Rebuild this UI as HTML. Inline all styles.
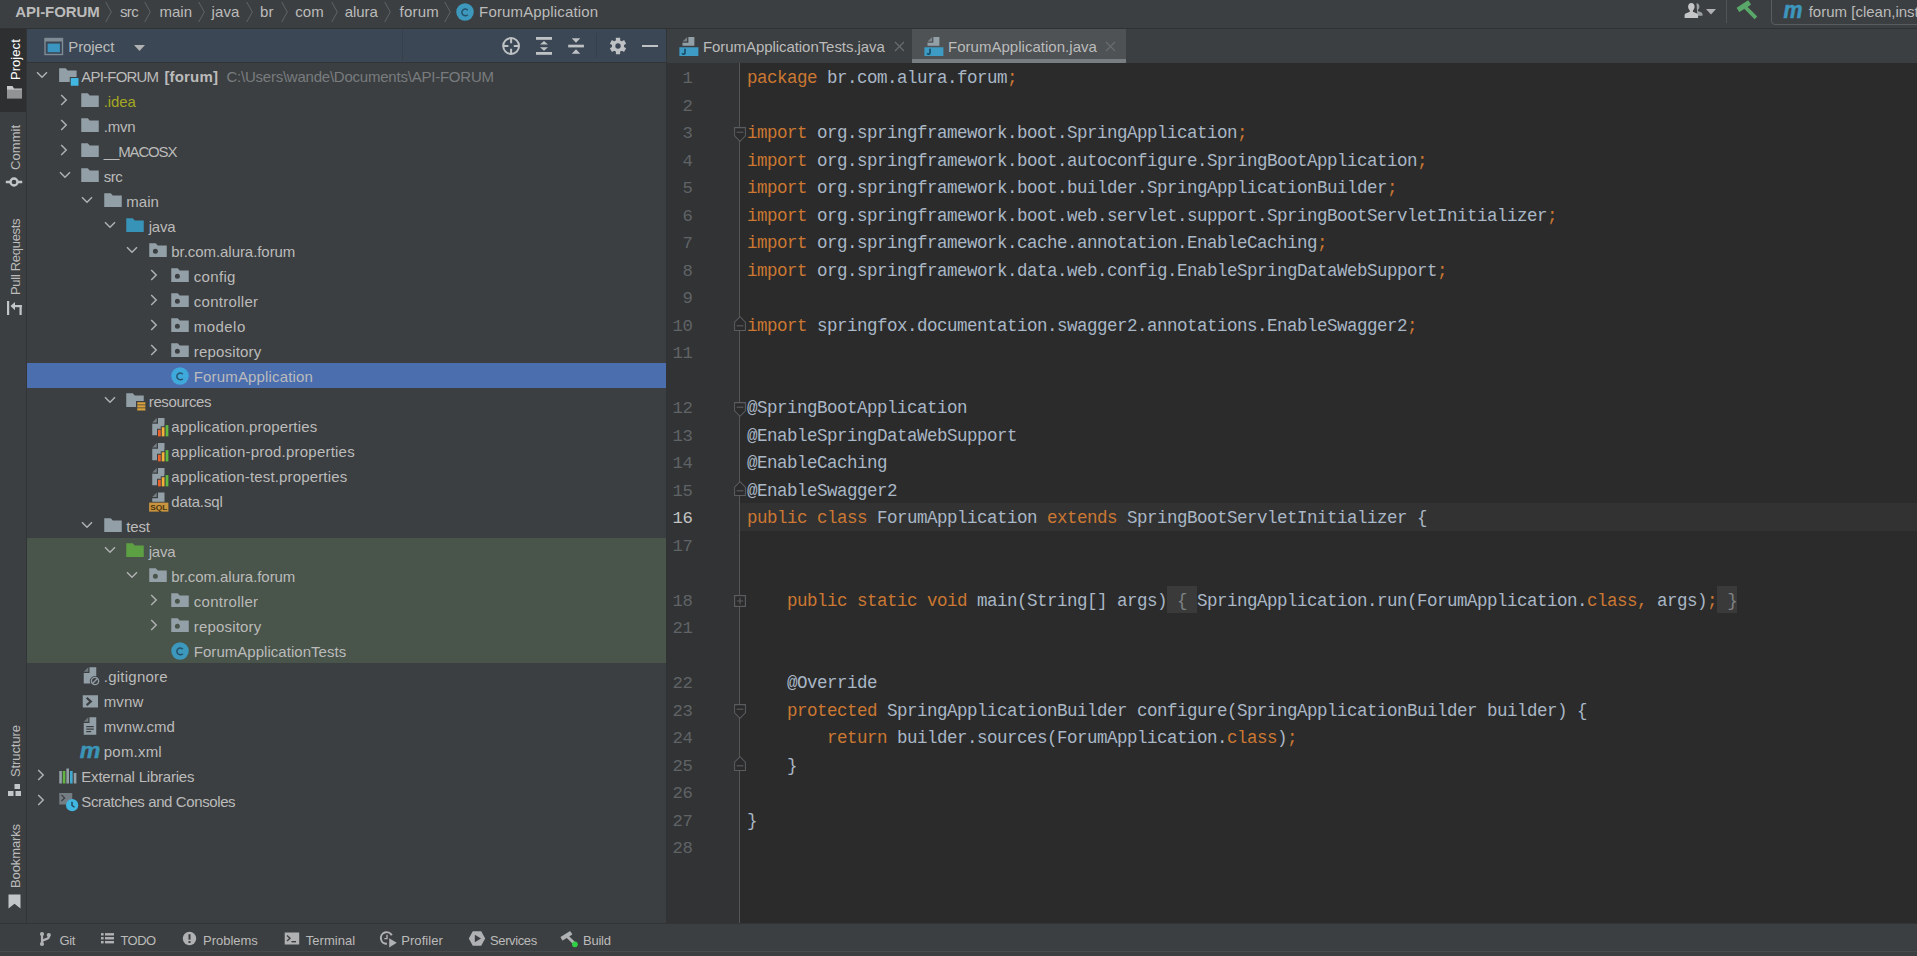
<!DOCTYPE html><html><head><meta charset="utf-8"><title>API-FORUM</title><style>
html,body{margin:0;padding:0;background:#3c3f41;overflow:hidden;}
body{width:1917px;height:956px;overflow:hidden;position:relative;font-family:"Liberation Sans",sans-serif;}
#app{position:absolute;left:0;top:0;width:1917px;height:956px;overflow:hidden;background:#3c3f41;}
.r{position:absolute;}
.ic{position:absolute;overflow:visible;}
.t{position:absolute;white-space:pre;line-height:1;}
.v{position:absolute;white-space:pre;line-height:1;transform-origin:0 0;transform:rotate(-90deg);font-size:13px;}
.ln{position:absolute;left:666px;width:26.400px;text-align:right;font-family:"Liberation Mono",monospace;font-size:17.300px;letter-spacing:-0.380px;line-height:27.5px;height:27.5px;color:#606366;white-space:pre;padding-top:2px;box-sizing:border-box;}
.ln.cur{color:#c4c4c4;}
.code{position:absolute;left:747px;font-family:"Liberation Mono",monospace;font-size:17.5px;letter-spacing:-0.5017px;line-height:27.5px;height:27.5px;color:#a9b7c6;white-space:pre;padding-top:2px;box-sizing:border-box;}
.k{color:#cc7832;}
.f{color:#7e8284;background:#3a3a3a;padding:5px 0 2.5px;}
</style></head><body><div id="app">
<div class="r" style="left:0px;top:0px;width:1917px;height:956px;background:#3c3f41;"></div>
<div class="r" style="left:0px;top:28px;width:1917px;height:1px;background:#2f3133;"></div>
<div class="r" style="left:0px;top:29px;width:26px;height:83px;background:#2d2f30;"></div>
<div class="r" style="left:26px;top:29px;width:1px;height:894px;background:#323537;"></div>
<div class="r" style="left:27px;top:29px;width:639px;height:33px;background:#3b4754;"></div>
<div class="r" style="left:27px;top:62px;width:639px;height:1px;background:#323537;"></div>
<div class="r" style="left:402px;top:30px;width:1px;height:31px;background:#35404b;"></div>
<div class="r" style="left:596px;top:33px;width:1px;height:25px;background:#33404d;"></div>
<div class="r" style="left:27px;top:363px;width:639px;height:25px;background:#4b6eaf;"></div>
<div class="r" style="left:27px;top:538px;width:639px;height:125px;background:#49544a;"></div>
<div class="r" style="left:666px;top:63px;width:73px;height:860px;background:#313335;"></div>
<div class="r" style="left:739px;top:63px;width:1px;height:860px;background:#555555;"></div>
<div class="r" style="left:740px;top:63px;width:1177px;height:860px;background:#2b2b2b;"></div>
<div class="r" style="left:666px;top:29px;width:1px;height:34px;background:#323537;"></div>
<div class="r" style="left:740px;top:503px;width:1177px;height:28px;background:#323232;"></div>
<div class="r" style="left:912px;top:29px;width:214px;height:30px;background:#4e5254;"></div>
<div class="r" style="left:912px;top:59px;width:214px;height:4px;background:#787d82;"></div>
<div class="r" style="left:0px;top:923px;width:1917px;height:1px;background:#323537;"></div>
<div class="r" style="left:0px;top:951px;width:1917px;height:1px;background:#484b4d;"></div>
<svg class="ic" style="left:105px;top:1px" width="8" height="22" viewBox="0 0 8 22"><path d="M0.7 1L6.3 11L0.7 21" fill="none" stroke="#606467" stroke-width="1"/></svg>
<svg class="ic" style="left:144.2px;top:1px" width="8" height="22" viewBox="0 0 8 22"><path d="M0.7 1L6.3 11L0.7 21" fill="none" stroke="#606467" stroke-width="1"/></svg>
<svg class="ic" style="left:198px;top:1px" width="8" height="22" viewBox="0 0 8 22"><path d="M0.7 1L6.3 11L0.7 21" fill="none" stroke="#606467" stroke-width="1"/></svg>
<svg class="ic" style="left:245.6px;top:1px" width="8" height="22" viewBox="0 0 8 22"><path d="M0.7 1L6.3 11L0.7 21" fill="none" stroke="#606467" stroke-width="1"/></svg>
<svg class="ic" style="left:281.2px;top:1px" width="8" height="22" viewBox="0 0 8 22"><path d="M0.7 1L6.3 11L0.7 21" fill="none" stroke="#606467" stroke-width="1"/></svg>
<svg class="ic" style="left:330.8px;top:1px" width="8" height="22" viewBox="0 0 8 22"><path d="M0.7 1L6.3 11L0.7 21" fill="none" stroke="#606467" stroke-width="1"/></svg>
<svg class="ic" style="left:383.8px;top:1px" width="8" height="22" viewBox="0 0 8 22"><path d="M0.7 1L6.3 11L0.7 21" fill="none" stroke="#606467" stroke-width="1"/></svg>
<svg class="ic" style="left:444px;top:1px" width="8" height="22" viewBox="0 0 8 22"><path d="M0.7 1L6.3 11L0.7 21" fill="none" stroke="#606467" stroke-width="1"/></svg>
<svg class="ic" style="left:455px;top:1.5px" width="20" height="20" viewBox="0 0 16 16" ><circle cx="8" cy="8" r="7" fill="#3c98bd"/><path fill="none" stroke="#1f3f52" stroke-opacity="0.8" stroke-width="1.2" d="M10.200 6.500a2.700 2.700 0 1 0 0 3.600"/></svg>
<svg class="ic" style="left:1684px;top:2px" width="20" height="18" viewBox="0 0 20 18">
<path fill="#9da0a2" d="M12.5 1.2c1.8 0 2.9 1.4 2.9 3.2c0 1.5-.6 2.8-1.5 3.5v1l3.6 1.6c.6.3 1 .9 1 1.6v1.6h-5.2z"/>
<path fill="#c4c6c7" d="M7.3 1c2 0 3.3 1.5 3.3 3.6c0 1.7-.7 3.1-1.7 3.9v1.2l4.1 1.9c.7.3 1.1 1 1.1 1.8V16H.6v-2.6c0-.8.4-1.5 1.1-1.8l4.1-1.9V8.500c-1-.8-1.700-2.200-1.700-3.900c0-2.100 1.300-3.600 3.200-3.600z"/></svg>
<svg class="ic" style="left:1706px;top:9px" width="10" height="6" viewBox="0 0 10 6"><path d="M0 0h10L5 5.600z" fill="#afb1b3"/></svg>
<div class="r" style="left:1726px;top:0px;width:1px;height:23px;background:#515456;"></div>
<svg class="ic" style="left:1736px;top:0px" width="24" height="22" viewBox="0 0 24 22"><g fill="#59a869"><rect x="-7" y="-2.600" width="14" height="5.200" rx="0.600" transform="translate(7.800 6.200) rotate(-33)"/><rect x="-1.900" y="0" width="3.800" height="16" transform="translate(8.600 6.500) rotate(-45)"/></g></svg>
<div class="r" style="left:1771px;top:-6px;width:160px;height:31px;border:1.500px solid #5a5d5f;border-radius:4px;box-sizing:border-box"></div>
<svg class="ic" style="left:1782px;top:1px" width="22" height="20" viewBox="0 0 22 20"><text x="11" y="17" font-family='"Liberation Sans", sans-serif' font-style="italic" font-weight="bold" font-size="23" text-anchor="middle" fill="#3d96bd" stroke="#3d96bd" stroke-width="0.600" textLength="19" lengthAdjust="spacingAndGlyphs">m</text></svg>
<svg class="ic" style="left:43.700px;top:37.200px" width="20" height="19" viewBox="0 0 20 19">
<rect x="1" y="1.500" width="17.500" height="16" fill="none" stroke="#7f8b95" stroke-width="1.400"/><rect x="1" y="1.500" width="17.500" height="3" fill="#7f8b95"/>
<rect x="3.600" y="6.600" width="12.300" height="8.600" fill="#3a95c0"/></svg>
<svg class="ic" style="left:133.500px;top:44.500px" width="11" height="7" viewBox="0 0 11 7"><path d="M0 0h11L5.500 6z" fill="#afb1b3"/></svg>
<svg class="ic" style="left:501px;top:36px" width="20" height="20" viewBox="0 0 20 20"><g fill="none" stroke="#bfc2c4" stroke-width="2">
<circle cx="10.1" cy="10" r="7.9"/><path d="M10.1 2.5v4.8M10.1 12.700V17.500M2.600 10h4.800M12.800 10H17.600"/></g></svg>
<svg class="ic" style="left:534px;top:36px" width="20" height="20" viewBox="0 0 20 20"><g fill="#bfc2c4">
<rect x="2" y="1" width="16" height="2.800"/><rect x="2" y="16" width="16" height="2.800"/>
<path d="M10 5.100l4 3.500H6zM10 14.700l4-3.500H6z"/></g></svg>
<svg class="ic" style="left:566px;top:36px" width="20" height="20" viewBox="0 0 20 20"><g fill="#bfc2c4">
<rect x="2.200" y="8.700" width="15.700" height="2.700"/>
<path d="M10 6.800l4.300-4.500H5.700zM10 13.200l4.300 4.500H5.700z"/></g></svg>
<svg class="ic" style="left:608px;top:36px" width="20" height="20" viewBox="0 0 20 20"><g transform="translate(10 10)">
<g fill="#bfc2c4"><rect x="-2.100" y="-8.200" width="4.200" height="16.400" rx="0.500"/><rect x="-2.100" y="-8.200" width="4.200" height="16.400" rx="0.500" transform="rotate(60)"/><rect x="-2.100" y="-8.200" width="4.200" height="16.400" rx="0.500" transform="rotate(120)"/>
<circle r="6.100"/></g><circle r="2.700" fill="#3b4754"/></g></svg>
<div class="r" style="left:642px;top:44.5px;width:16px;height:2.8px;background:#bfc2c4;"></div>
<svg class="ic" style="left:36.0px;top:71.0px" width="12" height="8" viewBox="0 0 12 8"><path d="M1 1.200L6 6.200L11 1.200" fill="none" stroke="#afb1b3" stroke-width="1.500"/></svg>
<svg class="ic" style="left:56.9px;top:64.8px" width="20" height="20" viewBox="0 0 16 16" ><path fill="#9aa7b0" fill-opacity="0.92" d="M1.7 2.5h5.2l1.6 1.9H15.700v5.100H10.200v4H1.700z"/><rect x="11" y="10.400" width="6.200" height="6.200" fill="#40b6e0"/></svg>
<svg class="ic" style="left:59.5px;top:94.0px" width="8" height="12" viewBox="0 0 8 12"><path d="M1.200 1L6.200 6L1.200 11" fill="none" stroke="#afb1b3" stroke-width="1.500"/></svg>
<svg class="ic" style="left:79.75px;top:89.8px" width="20" height="20" viewBox="0 0 16 16" ><path fill="#9aa7b0" fill-opacity="0.92" d="M1 2.5h5.2l1.6 1.9H15v9.1H1z"/></svg>
<svg class="ic" style="left:59.5px;top:119.0px" width="8" height="12" viewBox="0 0 8 12"><path d="M1.200 1L6.200 6L1.200 11" fill="none" stroke="#afb1b3" stroke-width="1.500"/></svg>
<svg class="ic" style="left:79.75px;top:114.8px" width="20" height="20" viewBox="0 0 16 16" ><path fill="#9aa7b0" fill-opacity="0.92" d="M1 2.5h5.2l1.6 1.9H15v9.1H1z"/></svg>
<svg class="ic" style="left:59.5px;top:144.0px" width="8" height="12" viewBox="0 0 8 12"><path d="M1.200 1L6.200 6L1.200 11" fill="none" stroke="#afb1b3" stroke-width="1.500"/></svg>
<svg class="ic" style="left:79.75px;top:139.8px" width="20" height="20" viewBox="0 0 16 16" ><path fill="#9aa7b0" fill-opacity="0.92" d="M1 2.5h5.2l1.6 1.9H15v9.1H1z"/></svg>
<svg class="ic" style="left:58.5px;top:171.0px" width="12" height="8" viewBox="0 0 12 8"><path d="M1 1.200L6 6.200L11 1.200" fill="none" stroke="#afb1b3" stroke-width="1.500"/></svg>
<svg class="ic" style="left:79.75px;top:164.8px" width="20" height="20" viewBox="0 0 16 16" ><path fill="#9aa7b0" fill-opacity="0.92" d="M1 2.5h5.2l1.6 1.9H15v9.1H1z"/></svg>
<svg class="ic" style="left:81.0px;top:196.0px" width="12" height="8" viewBox="0 0 12 8"><path d="M1 1.200L6 6.200L11 1.200" fill="none" stroke="#afb1b3" stroke-width="1.500"/></svg>
<svg class="ic" style="left:102.75px;top:189.8px" width="20" height="20" viewBox="0 0 16 16" ><path fill="#9aa7b0" fill-opacity="0.92" d="M1 2.5h5.2l1.6 1.9H15v9.1H1z"/></svg>
<svg class="ic" style="left:103.5px;top:221.0px" width="12" height="8" viewBox="0 0 12 8"><path d="M1 1.200L6 6.200L11 1.200" fill="none" stroke="#afb1b3" stroke-width="1.500"/></svg>
<svg class="ic" style="left:124.75px;top:214.8px" width="20" height="20" viewBox="0 0 16 16" ><path fill="#3893b9" fill-opacity="1" d="M1 2.5h5.2l1.6 1.9H15v9.1H1z"/></svg>
<svg class="ic" style="left:126.0px;top:246.0px" width="12" height="8" viewBox="0 0 12 8"><path d="M1 1.200L6 6.200L11 1.200" fill="none" stroke="#afb1b3" stroke-width="1.500"/></svg>
<svg class="ic" style="left:147.85px;top:239.8px" width="20" height="20" viewBox="0 0 16 16" ><path fill="#9aa7b0" fill-opacity="0.92" fill-rule="evenodd" d="M1 2.5h5.2l1.6 1.9H15v9.1H1z M3.9 9a2 2 0 1 0 4 0a2 2 0 1 0 -4 0z"/></svg>
<svg class="ic" style="left:149.5px;top:269.0px" width="8" height="12" viewBox="0 0 8 12"><path d="M1.200 1L6.200 6L1.200 11" fill="none" stroke="#afb1b3" stroke-width="1.500"/></svg>
<svg class="ic" style="left:169.75px;top:264.8px" width="20" height="20" viewBox="0 0 16 16" ><path fill="#9aa7b0" fill-opacity="0.92" fill-rule="evenodd" d="M1 2.5h5.2l1.6 1.9H15v9.1H1z M3.9 9a2 2 0 1 0 4 0a2 2 0 1 0 -4 0z"/></svg>
<svg class="ic" style="left:149.5px;top:294.0px" width="8" height="12" viewBox="0 0 8 12"><path d="M1.200 1L6.200 6L1.200 11" fill="none" stroke="#afb1b3" stroke-width="1.500"/></svg>
<svg class="ic" style="left:169.75px;top:289.8px" width="20" height="20" viewBox="0 0 16 16" ><path fill="#9aa7b0" fill-opacity="0.92" fill-rule="evenodd" d="M1 2.5h5.2l1.6 1.9H15v9.1H1z M3.9 9a2 2 0 1 0 4 0a2 2 0 1 0 -4 0z"/></svg>
<svg class="ic" style="left:149.5px;top:319.0px" width="8" height="12" viewBox="0 0 8 12"><path d="M1.200 1L6.200 6L1.200 11" fill="none" stroke="#afb1b3" stroke-width="1.500"/></svg>
<svg class="ic" style="left:169.75px;top:314.8px" width="20" height="20" viewBox="0 0 16 16" ><path fill="#9aa7b0" fill-opacity="0.92" fill-rule="evenodd" d="M1 2.5h5.2l1.6 1.9H15v9.1H1z M3.9 9a2 2 0 1 0 4 0a2 2 0 1 0 -4 0z"/></svg>
<svg class="ic" style="left:149.5px;top:344.0px" width="8" height="12" viewBox="0 0 8 12"><path d="M1.200 1L6.200 6L1.200 11" fill="none" stroke="#afb1b3" stroke-width="1.500"/></svg>
<svg class="ic" style="left:169.75px;top:339.8px" width="20" height="20" viewBox="0 0 16 16" ><path fill="#9aa7b0" fill-opacity="0.92" fill-rule="evenodd" d="M1 2.5h5.2l1.6 1.9H15v9.1H1z M3.9 9a2 2 0 1 0 4 0a2 2 0 1 0 -4 0z"/></svg>
<svg class="ic" style="left:169.75px;top:366.1px" width="20" height="20" viewBox="0 0 16 16" ><circle cx="8" cy="8" r="7" fill="#3fa9dc"/><path fill="none" stroke="#1f3f52" stroke-opacity="0.8" stroke-width="1.2" d="M10.200 6.500a2.700 2.700 0 1 0 0 3.600"/></svg>
<svg class="ic" style="left:103.5px;top:396.0px" width="12" height="8" viewBox="0 0 12 8"><path d="M1 1.200L6 6.200L11 1.200" fill="none" stroke="#afb1b3" stroke-width="1.500"/></svg>
<svg class="ic" style="left:124.75px;top:389.8px" width="20" height="20" viewBox="0 0 16 16" ><path fill="#9aa7b0" fill-opacity="0.92" d="M1 2.5h5.2l1.6 1.9H15v4.400H8.800v4.700H1z"/><path fill="#d9a13a" d="M9.800 9.800h6.500v1.700h-6.500zM9.800 12.200h6.500v1.700h-6.500zM9.800 14.600h6.500v1.700h-6.500z"/></svg>
<svg class="ic" style="left:147.85px;top:415.7px" width="20" height="20" viewBox="0 0 16 16" ><path fill="#9aa7b0" fill-opacity="0.92" d="M8 1.600H13.200V15.400H3.400V6.200H8z"/><path fill="#9aa7b0" fill-opacity="0.6" d="M7 1.600L3.400 5.200H7z"/><path fill="#3c3f41" d="M7.200 10.200H10.200V8.200H13.300V6.500H17V17H7.200z"/><rect x="8" y="11" width="2.200" height="5.300" fill="#e8642c"/><rect x="11" y="9" width="2.200" height="7.300" fill="#f1b03a"/><rect x="14.100" y="7.300" width="2.200" height="9" fill="#5fb83f"/></svg>
<svg class="ic" style="left:147.85px;top:440.7px" width="20" height="20" viewBox="0 0 16 16" ><path fill="#9aa7b0" fill-opacity="0.92" d="M8 1.600H13.200V15.400H3.400V6.200H8z"/><path fill="#9aa7b0" fill-opacity="0.6" d="M7 1.600L3.400 5.200H7z"/><path fill="#3c3f41" d="M7.200 10.200H10.200V8.200H13.300V6.500H17V17H7.200z"/><rect x="8" y="11" width="2.200" height="5.300" fill="#e8642c"/><rect x="11" y="9" width="2.200" height="7.300" fill="#f1b03a"/><rect x="14.100" y="7.300" width="2.200" height="9" fill="#5fb83f"/></svg>
<svg class="ic" style="left:147.85px;top:465.7px" width="20" height="20" viewBox="0 0 16 16" ><path fill="#9aa7b0" fill-opacity="0.92" d="M8 1.600H13.200V15.400H3.400V6.200H8z"/><path fill="#9aa7b0" fill-opacity="0.6" d="M7 1.600L3.400 5.200H7z"/><path fill="#3c3f41" d="M7.200 10.200H10.200V8.200H13.300V6.500H17V17H7.200z"/><rect x="8" y="11" width="2.200" height="5.300" fill="#e8642c"/><rect x="11" y="9" width="2.200" height="7.300" fill="#f1b03a"/><rect x="14.100" y="7.300" width="2.200" height="9" fill="#5fb83f"/></svg>
<svg class="ic" style="left:147.85px;top:490.7px" width="20" height="20" viewBox="0 0 16 16" ><path fill="#9aa7b0" fill-opacity="0.92" d="M8 1.100H13.200V8.600H3.400V5.700H8z"/><path fill="#9aa7b0" fill-opacity="0.6" d="M7 1.100L3.400 4.700H7z"/><rect x="0.900" y="9.300" width="15.400" height="7.200" fill="#c9963f"/><text x="8.600" y="15.400" font-family="Liberation Sans, sans-serif" font-weight="bold" font-size="6.300" text-anchor="middle" fill="#4a3512" textLength="13.800" lengthAdjust="spacingAndGlyphs">SQL</text></svg>
<svg class="ic" style="left:81.0px;top:521.0px" width="12" height="8" viewBox="0 0 12 8"><path d="M1 1.200L6 6.200L11 1.200" fill="none" stroke="#afb1b3" stroke-width="1.500"/></svg>
<svg class="ic" style="left:102.75px;top:514.8px" width="20" height="20" viewBox="0 0 16 16" ><path fill="#9aa7b0" fill-opacity="0.92" d="M1 2.5h5.2l1.6 1.9H15v9.1H1z"/></svg>
<svg class="ic" style="left:103.5px;top:546.0px" width="12" height="8" viewBox="0 0 12 8"><path d="M1 1.200L6 6.200L11 1.200" fill="none" stroke="#afb1b3" stroke-width="1.500"/></svg>
<svg class="ic" style="left:124.75px;top:539.8px" width="20" height="20" viewBox="0 0 16 16" ><path fill="#5fae42" fill-opacity="0.85" d="M1 2.5h5.2l1.6 1.9H15v9.1H1z"/></svg>
<svg class="ic" style="left:126.0px;top:571.0px" width="12" height="8" viewBox="0 0 12 8"><path d="M1 1.200L6 6.200L11 1.200" fill="none" stroke="#afb1b3" stroke-width="1.500"/></svg>
<svg class="ic" style="left:147.85px;top:564.8px" width="20" height="20" viewBox="0 0 16 16" ><path fill="#9aa7b0" fill-opacity="0.92" fill-rule="evenodd" d="M1 2.5h5.2l1.6 1.9H15v9.1H1z M3.9 9a2 2 0 1 0 4 0a2 2 0 1 0 -4 0z"/></svg>
<svg class="ic" style="left:149.5px;top:594.0px" width="8" height="12" viewBox="0 0 8 12"><path d="M1.200 1L6.200 6L1.200 11" fill="none" stroke="#afb1b3" stroke-width="1.500"/></svg>
<svg class="ic" style="left:169.75px;top:589.8px" width="20" height="20" viewBox="0 0 16 16" ><path fill="#9aa7b0" fill-opacity="0.92" fill-rule="evenodd" d="M1 2.5h5.2l1.6 1.9H15v9.1H1z M3.9 9a2 2 0 1 0 4 0a2 2 0 1 0 -4 0z"/></svg>
<svg class="ic" style="left:149.5px;top:619.0px" width="8" height="12" viewBox="0 0 8 12"><path d="M1.200 1L6.200 6L1.200 11" fill="none" stroke="#afb1b3" stroke-width="1.500"/></svg>
<svg class="ic" style="left:169.75px;top:614.8px" width="20" height="20" viewBox="0 0 16 16" ><path fill="#9aa7b0" fill-opacity="0.92" fill-rule="evenodd" d="M1 2.5h5.2l1.6 1.9H15v9.1H1z M3.9 9a2 2 0 1 0 4 0a2 2 0 1 0 -4 0z"/></svg>
<svg class="ic" style="left:169.75px;top:641.1px" width="20" height="20" viewBox="0 0 16 16" ><circle cx="8" cy="8" r="7" fill="#3c98bd"/><path fill="none" stroke="#1f3f52" stroke-opacity="0.8" stroke-width="1.2" d="M10.200 6.500a2.700 2.700 0 1 0 0 3.600"/></svg>
<svg class="ic" style="left:79.75px;top:665.7px" width="20" height="20" viewBox="0 0 16 16" ><path fill="#9aa7b0" fill-opacity="0.92" d="M7.6 1H13v7.2a4 4 0 0 0 -4.6 5.8H3V5.6h4.6z"/><path fill="#9aa7b0" fill-opacity="0.55" d="M6.6 1L3 4.6h3.6z"/><circle cx="12" cy="12" r="2.9" fill="none" stroke="#9aa7b0" stroke-opacity="0.9" stroke-width="1.1"/><path d="M10 14L14 10" stroke="#9aa7b0" stroke-opacity="0.9" stroke-width="1.1"/></svg>
<svg class="ic" style="left:79.75px;top:690.7px" width="20" height="20" viewBox="0 0 16 16" ><path fill="#9aa7b0" fill-opacity="0.92" fill-rule="evenodd" d="M2.200 3.400h12.200v9.800H2.200z M4.700 6l2.600 2.300l-2.600 2.300l1.200 1.300L10 8.300L5.900 4.700z"/></svg>
<svg class="ic" style="left:79.75px;top:715.7px" width="20" height="20" viewBox="0 0 16 16" ><path fill="#9aa7b0" fill-opacity="0.92" fill-rule="evenodd" d="M7.6 1H13v14H3V5.6h4.6z M5 8h6v1H5z M5 10h6v1H5z M5 12h4v1H5z"/><path fill="#9aa7b0" fill-opacity="0.55" d="M6.6 1L3 4.6h3.6z"/></svg>
<svg class="ic" style="left:79.75px;top:740.7px" width="20" height="20" viewBox="0 0 16 16" ><text x="8" y="13.2" font-family="Liberation Sans, sans-serif" font-style="italic" font-weight="bold" font-size="17.500" text-anchor="middle" fill="#3b95b9" stroke="#3b95b9" stroke-width="0.350" textLength="16.500" lengthAdjust="spacingAndGlyphs">m</text></svg>
<svg class="ic" style="left:37.0px;top:769.0px" width="8" height="12" viewBox="0 0 8 12"><path d="M1.200 1L6.200 6L1.200 11" fill="none" stroke="#afb1b3" stroke-width="1.500"/></svg>
<svg class="ic" style="left:58.1px;top:765.7px" width="20" height="20" viewBox="0 0 16 16" ><rect x="1" y="4" width="2.1" height="10" fill="#9aa7b0" fill-opacity="0.92"/><rect x="3.8" y="4" width="2.1" height="10" fill="#62b543"/><rect x="6.7" y="2" width="2.1" height="12" fill="#9aa7b0" fill-opacity="0.92"/><rect x="9.6" y="4" width="2.1" height="10" fill="#40b6e0" fill-opacity="0.9"/><rect x="12.6" y="5.6" width="2.1" height="8.4" fill="#9aa7b0" fill-opacity="0.92"/></svg>
<svg class="ic" style="left:37.0px;top:794.0px" width="8" height="12" viewBox="0 0 8 12"><path d="M1.200 1L6.200 6L1.200 11" fill="none" stroke="#afb1b3" stroke-width="1.500"/></svg>
<svg class="ic" style="left:58.1px;top:790.7px" width="20" height="20" viewBox="0 0 16 16" ><path fill="#9aa7b0" fill-opacity="0.6" fill-rule="evenodd" d="M1 1.6h10.4v5.2a5 5 0 0 0 -4.6 4H1z M2.4 3.4l2.2 2.1l-2.2 2.1l.7 .7l2.9-2.8l-2.9-2.8z"/><circle cx="11.3" cy="11.3" r="4.9" fill="#40b6e0"/><path d="M11.2 8.6v3l2 1.400" fill="none" stroke="#1f3f52" stroke-width="1.1"/></svg>
<svg class="ic" style="left:6px;top:84px" width="17" height="16" viewBox="0 0 17 16"><path fill="#c8c9ca" d="M1 2h5.500l1.500 2.600H16V14.600H1z"/><path fill="#2d2f30" fill-opacity=".35" d="M1 5.600h15V14.600H1z"/></svg>
<svg class="ic" style="left:5px;top:175px" width="18" height="14" viewBox="0 0 18 14"><g fill="none" stroke="#c3c6c8" stroke-width="2.300"><circle cx="9" cy="7" r="3.500"/><path d="M0.800 7h4.500M12.700 7h4.500"/></g></svg>
<svg class="ic" style="left:6px;top:300px" width="17" height="16" viewBox="0 0 17 16"><g fill="#c3c6c8"><rect x="1" y="1" width="2.200" height="14"/><rect x="13.500" y="5" width="2.200" height="10"/><rect x="8" y="5" width="7.700" height="2.200"/><path d="M9 2l-4.500 4.100L9 10.200z"/></g></svg>
<svg class="ic" style="left:7px;top:783px" width="15" height="14" viewBox="0 0 15 14"><g fill="#c3c6c8"><rect x="7.500" y="1" width="5.500" height="5"/><rect x="1" y="8" width="5.500" height="5"/><rect x="8.500" y="8" width="5.500" height="5"/></g></svg>
<svg class="ic" style="left:7px;top:894px" width="15" height="15" viewBox="0 0 15 15"><path fill="#c3c6c8" d="M1.500 0.500h12V14.500L7.500 9.700L1.500 14.500z"/></svg>
<svg class="ic" style="left:38px;top:931px" width="14" height="16" viewBox="0 0 14 16"><g fill="none" stroke="#afb1b3" stroke-width="2.2"><path d="M4 3v10M10.800 4v2c0 2.600-6.800 2.200-6.800 5"/></g><g fill="#afb1b3"><circle cx="4" cy="3" r="2.100"/><circle cx="4" cy="13" r="2.100"/><circle cx="10.800" cy="4" r="2.100"/></g></svg>
<svg class="ic" style="left:100px;top:932px" width="15" height="14" viewBox="0 0 15 14"><g fill="#afb1b3"><rect x="1" y="1.100" width="2.600" height="2.400"/><rect x="5" y="1.100" width="9" height="2.400"/><rect x="1" y="5.050" width="2.600" height="2.400"/><rect x="5" y="5.050" width="9" height="2.400"/><rect x="1" y="9" width="2.600" height="2.400"/><rect x="5" y="9" width="9" height="2.400"/></g></svg>
<svg class="ic" style="left:182px;top:931px" width="15" height="15" viewBox="0 0 15 15"><circle cx="7.500" cy="7.500" r="6.700" fill="#afb1b3"/><rect x="6.500" y="3.200" width="2" height="5.500" fill="#3c3f41"/><rect x="6.500" y="10" width="2" height="2" fill="#3c3f41"/></svg>
<svg class="ic" style="left:284px;top:931px" width="16" height="15" viewBox="0 0 16 15"><rect x="0.700" y="1.500" width="14.500" height="12" fill="#afb1b3"/><path d="M3 4.500l3 2.800l-3 2.800" fill="none" stroke="#3c3f41" stroke-width="1.400"/><rect x="7.500" y="10" width="4.500" height="1.400" fill="#3c3f41"/></svg>
<svg class="ic" style="left:380px;top:930.800px" width="18" height="18" viewBox="0 0 18 18"><path d="M11.800 4.300A5.800 5.800 0 1 0 7 12.800" fill="none" stroke="#afb1b3" stroke-width="2"/><path d="M7 3.800V7.600H4.300" fill="none" stroke="#afb1b3" stroke-width="1.400"/><path d="M9.200 7.200l7.600 4.600l-7.600 4.600z" fill="#afb1b3"/></svg>
<svg class="ic" style="left:468px;top:930px" width="18" height="17" viewBox="0 0 18 17"><path d="M4.800 1.200h8.400l4 7.300l-4 7.300H4.800l-4-7.300z" fill="#afb1b3"/><path d="M6.800 4.800l6.200 3.700l-6.200 3.700z" fill="#3c3f41"/></svg>
<svg class="ic" style="left:560px;top:930px" width="19" height="18" viewBox="0 0 19 18"><g fill="#afb1b3"><rect x="-5.800" y="-2.100" width="11.600" height="4.200" rx="0.600" transform="translate(6.400 5.800) rotate(-32)"/><rect x="-1.500" y="0" width="3" height="11.500" transform="translate(6.800 6) rotate(-46)"/></g><circle cx="14.900" cy="14.300" r="2.900" fill="#2fd045"/></svg>
<svg class="ic" style="left:677.6px;top:36px" width="20" height="20" viewBox="0 0 16 16" ><path fill="#9aa7b0" fill-opacity="0.92" d="M8.300 0.700H13.100V7.700H3.600V5.400H8.300z"/><path fill="#9aa7b0" fill-opacity="0.6" d="M7.300 0.700L3.600 4.400H7.300z"/><rect x="1.100" y="9" width="15.200" height="7" fill="#3d9bc4"/><path d="M5.600 10.200v3.300a1.200 1.200 0 0 1 -2.300 0.300" fill="none" stroke="#174a63" stroke-width="1.300"/></svg>
<svg class="ic" style="left:923.1px;top:36px" width="20" height="20" viewBox="0 0 16 16" ><path fill="#9aa7b0" fill-opacity="0.92" d="M8.300 0.700H13.100V7.700H3.600V5.400H8.300z"/><path fill="#9aa7b0" fill-opacity="0.6" d="M7.300 0.700L3.600 4.400H7.300z"/><rect x="1.100" y="9" width="15.200" height="7" fill="#3d9bc4"/><path d="M5.600 10.200v3.300a1.200 1.200 0 0 1 -2.300 0.300" fill="none" stroke="#174a63" stroke-width="1.300"/></svg>
<svg class="ic" style="left:893.5px;top:40.500px" width="11" height="11" viewBox="0 0 11 11"><path d="M1 1L10 10M10 1L1 10" stroke="#676c6f" stroke-width="1.200"/></svg>
<svg class="ic" style="left:1105.3px;top:40.500px" width="11" height="11" viewBox="0 0 11 11"><path d="M1 1L10 10M10 1L1 10" stroke="#676c6f" stroke-width="1.200"/></svg>
<div class="ln" style="top:63.0px">1</div>
<div class="code" style="top:63.0px"><span class="k">package</span> br.com.alura.forum<span class="k">;</span></div>
<div class="ln" style="top:90.5px">2</div>
<div class="ln" style="top:118.0px">3</div>
<div class="code" style="top:118.0px"><span class="k">import</span> org.springframework.boot.SpringApplication<span class="k">;</span></div>
<div class="ln" style="top:145.5px">4</div>
<div class="code" style="top:145.5px"><span class="k">import</span> org.springframework.boot.autoconfigure.SpringBootApplication<span class="k">;</span></div>
<div class="ln" style="top:173.0px">5</div>
<div class="code" style="top:173.0px"><span class="k">import</span> org.springframework.boot.builder.SpringApplicationBuilder<span class="k">;</span></div>
<div class="ln" style="top:200.5px">6</div>
<div class="code" style="top:200.5px"><span class="k">import</span> org.springframework.boot.web.servlet.support.SpringBootServletInitializer<span class="k">;</span></div>
<div class="ln" style="top:228.0px">7</div>
<div class="code" style="top:228.0px"><span class="k">import</span> org.springframework.cache.annotation.EnableCaching<span class="k">;</span></div>
<div class="ln" style="top:255.5px">8</div>
<div class="code" style="top:255.5px"><span class="k">import</span> org.springframework.data.web.config.EnableSpringDataWebSupport<span class="k">;</span></div>
<div class="ln" style="top:283.0px">9</div>
<div class="ln" style="top:310.5px">10</div>
<div class="code" style="top:310.5px"><span class="k">import</span> springfox.documentation.swagger2.annotations.EnableSwagger2<span class="k">;</span></div>
<div class="ln" style="top:338.0px">11</div>
<div class="ln" style="top:393.0px">12</div>
<div class="code" style="top:393.0px">@SpringBootApplication</div>
<div class="ln" style="top:420.5px">13</div>
<div class="code" style="top:420.5px">@EnableSpringDataWebSupport</div>
<div class="ln" style="top:448.0px">14</div>
<div class="code" style="top:448.0px">@EnableCaching</div>
<div class="ln" style="top:475.5px">15</div>
<div class="code" style="top:475.5px">@EnableSwagger2</div>
<div class="ln cur" style="top:503.0px">16</div>
<div class="code" style="top:503.0px"><span class="k">public class</span> ForumApplication <span class="k">extends</span> SpringBootServletInitializer {</div>
<div class="ln" style="top:530.5px">17</div>
<div class="ln" style="top:585.5px">18</div>
<div class="code" style="top:585.5px">    <span class="k">public static void</span> main(String[] args)<span class="f"> { </span>SpringApplication.run(ForumApplication.<span class="k">class,</span> args)<span class="k">;</span><span class="f"> }</span></div>
<div class="ln" style="top:613.0px">21</div>
<div class="ln" style="top:668.0px">22</div>
<div class="code" style="top:668.0px">    @Override</div>
<div class="ln" style="top:695.5px">23</div>
<div class="code" style="top:695.5px">    <span class="k">protected</span> SpringApplicationBuilder configure(SpringApplicationBuilder builder) {</div>
<div class="ln" style="top:723.0px">24</div>
<div class="code" style="top:723.0px">        <span class="k">return</span> builder.sources(ForumApplication.<span class="k">class</span>)<span class="k">;</span></div>
<div class="ln" style="top:750.5px">25</div>
<div class="code" style="top:750.5px">    }</div>
<div class="ln" style="top:778.0px">26</div>
<div class="ln" style="top:805.5px">27</div>
<div class="code" style="top:805.5px">}</div>
<div class="ln" style="top:833.0px">28</div>
<svg class="ic" style="left:733.5px;top:126.5px" width="12" height="15" viewBox="0 0 12 15"><path d="M0.6 0.6h10.8v8.2L6 14.3L0.6 8.8z" fill="#2b2b2b" stroke="#5a5d60" stroke-width="1.05"/><path d="M2.6 5.2h6.8" stroke="#5a5d60" stroke-width="1.1"/></svg>
<svg class="ic" style="left:733.5px;top:316.0px" width="12" height="15" viewBox="0 0 12 15"><path d="M0.6 14.4h10.8V6.2L6 0.7L0.6 6.2z" fill="#2b2b2b" stroke="#5a5d60" stroke-width="1.05"/><path d="M2.6 9.8h6.8" stroke="#5a5d60" stroke-width="1.1"/></svg>
<svg class="ic" style="left:733.5px;top:401.5px" width="12" height="15" viewBox="0 0 12 15"><path d="M0.6 0.6h10.8v8.2L6 14.3L0.6 8.8z" fill="#2b2b2b" stroke="#5a5d60" stroke-width="1.05"/><path d="M2.6 5.2h6.8" stroke="#5a5d60" stroke-width="1.1"/></svg>
<svg class="ic" style="left:733.5px;top:481.0px" width="12" height="15" viewBox="0 0 12 15"><path d="M0.6 14.4h10.8V6.2L6 0.7L0.6 6.2z" fill="#2b2b2b" stroke="#5a5d60" stroke-width="1.05"/><path d="M2.6 9.8h6.8" stroke="#5a5d60" stroke-width="1.1"/></svg>
<svg class="ic" style="left:733.5px;top:594.5px" width="12" height="12" viewBox="0 0 12 12"><rect x=".6" y=".6" width="10.8" height="10.8" fill="#2b2b2b" stroke="#5a5d60" stroke-width="1.2"/><path d="M2.8 6h6.400M6 2.800v6.400" stroke="#5a5d60" stroke-width="1.1"/></svg>
<svg class="ic" style="left:733.5px;top:704.0px" width="12" height="15" viewBox="0 0 12 15"><path d="M0.6 0.6h10.8v8.2L6 14.3L0.6 8.8z" fill="#2b2b2b" stroke="#5a5d60" stroke-width="1.05"/><path d="M2.6 5.2h6.8" stroke="#5a5d60" stroke-width="1.1"/></svg>
<svg class="ic" style="left:733.5px;top:756.0px" width="12" height="15" viewBox="0 0 12 15"><path d="M0.6 14.4h10.8V6.2L6 0.7L0.6 6.2z" fill="#2b2b2b" stroke="#5a5d60" stroke-width="1.05"/><path d="M2.6 9.8h6.8" stroke="#5a5d60" stroke-width="1.1"/></svg>
<div class="t" style="left:15.30px;top:4.30px;font-size:15px;color:#bbbbbb;letter-spacing:-0.056px;font-weight:bold;">API-FORUM</div>
<div class="t" style="left:119.90px;top:4.30px;font-size:15px;color:#bbbbbb;letter-spacing:-0.600px;">src</div>
<div class="t" style="left:159.60px;top:4.30px;font-size:15px;color:#bbbbbb;letter-spacing:-0.029px;">main</div>
<div class="t" style="left:211.60px;top:4.30px;font-size:15px;color:#bbbbbb;letter-spacing:0.092px;">java</div>
<div class="t" style="left:260.00px;top:4.30px;font-size:15px;color:#bbbbbb;letter-spacing:0.228px;">br</div>
<div class="t" style="left:295.20px;top:4.30px;font-size:15px;color:#bbbbbb;letter-spacing:0.085px;">com</div>
<div class="t" style="left:344.80px;top:4.30px;font-size:15px;color:#bbbbbb;letter-spacing:-0.092px;">alura</div>
<div class="t" style="left:399.50px;top:4.30px;font-size:15px;color:#bbbbbb;letter-spacing:0.211px;">forum</div>
<div class="t" style="left:479.10px;top:4.30px;font-size:15px;color:#bbbbbb;letter-spacing:0.155px;">ForumApplication</div>
<div class="t" style="left:1808.70px;top:4.30px;font-size:15px;color:#bbbbbb;letter-spacing:0.003px;">forum [clean,inst</div>
<div class="t" style="left:68.30px;top:39.30px;font-size:15px;color:#bbbbbb;letter-spacing:-0.098px;">Project</div>
<div class="t" style="left:103.80px;top:94.30px;font-size:15px;color:#a5a821;letter-spacing:-0.106px;">.idea</div>
<div class="t" style="left:103.80px;top:119.30px;font-size:15px;color:#bbbbbb;letter-spacing:-0.254px;">.mvn</div>
<div class="t" style="left:103.80px;top:144.30px;font-size:15px;color:#bbbbbb;letter-spacing:-1.150px;">__MACOSX</div>
<div class="t" style="left:103.80px;top:169.30px;font-size:15px;color:#bbbbbb;letter-spacing:-0.500px;">src</div>
<div class="t" style="left:126.30px;top:194.30px;font-size:15px;color:#bbbbbb;letter-spacing:0.021px;">main</div>
<div class="t" style="left:148.80px;top:219.30px;font-size:15px;color:#bbbbbb;letter-spacing:-0.258px;">java</div>
<div class="t" style="left:171.30px;top:244.30px;font-size:15px;color:#bbbbbb;letter-spacing:-0.058px;">br.com.alura.forum</div>
<div class="t" style="left:193.80px;top:269.30px;font-size:15px;color:#bbbbbb;letter-spacing:0.311px;">config</div>
<div class="t" style="left:193.80px;top:294.30px;font-size:15px;color:#bbbbbb;letter-spacing:0.280px;">controller</div>
<div class="t" style="left:193.80px;top:319.30px;font-size:15px;color:#bbbbbb;letter-spacing:0.449px;">modelo</div>
<div class="t" style="left:193.80px;top:344.30px;font-size:15px;color:#bbbbbb;letter-spacing:0.164px;">repository</div>
<div class="t" style="left:193.80px;top:369.30px;font-size:15px;color:#bbbbbb;letter-spacing:0.155px;">ForumApplication</div>
<div class="t" style="left:148.80px;top:394.30px;font-size:15px;color:#bbbbbb;letter-spacing:-0.395px;">resources</div>
<div class="t" style="left:171.30px;top:419.30px;font-size:15px;color:#bbbbbb;letter-spacing:0.155px;">application.properties</div>
<div class="t" style="left:171.30px;top:444.30px;font-size:15px;color:#bbbbbb;letter-spacing:0.222px;">application-prod.properties</div>
<div class="t" style="left:171.30px;top:469.30px;font-size:15px;color:#bbbbbb;letter-spacing:0.157px;">application-test.properties</div>
<div class="t" style="left:171.30px;top:494.30px;font-size:15px;color:#bbbbbb;letter-spacing:-0.156px;">data.sql</div>
<div class="t" style="left:126.30px;top:519.30px;font-size:15px;color:#bbbbbb;letter-spacing:-0.172px;">test</div>
<div class="t" style="left:148.80px;top:544.30px;font-size:15px;color:#bbbbbb;letter-spacing:-0.258px;">java</div>
<div class="t" style="left:171.30px;top:569.30px;font-size:15px;color:#bbbbbb;letter-spacing:-0.058px;">br.com.alura.forum</div>
<div class="t" style="left:193.80px;top:594.30px;font-size:15px;color:#bbbbbb;letter-spacing:0.280px;">controller</div>
<div class="t" style="left:193.80px;top:619.30px;font-size:15px;color:#bbbbbb;letter-spacing:0.164px;">repository</div>
<div class="t" style="left:193.80px;top:644.30px;font-size:15px;color:#bbbbbb;letter-spacing:0.032px;">ForumApplicationTests</div>
<div class="t" style="left:103.80px;top:669.30px;font-size:15px;color:#bbbbbb;letter-spacing:0.238px;">.gitignore</div>
<div class="t" style="left:103.80px;top:694.30px;font-size:15px;color:#bbbbbb;letter-spacing:0.082px;">mvnw</div>
<div class="t" style="left:103.80px;top:719.30px;font-size:15px;color:#bbbbbb;letter-spacing:0.030px;">mvnw.cmd</div>
<div class="t" style="left:103.80px;top:744.30px;font-size:15px;color:#bbbbbb;letter-spacing:0.202px;">pom.xml</div>
<div class="t" style="left:81.30px;top:769.30px;font-size:15px;color:#bbbbbb;letter-spacing:-0.207px;">External Libraries</div>
<div class="t" style="left:81.30px;top:794.30px;font-size:15px;color:#bbbbbb;letter-spacing:-0.395px;">Scratches and Consoles</div>
<div class="t" style="left:81.30px;top:69.30px;font-size:15px;color:#bbbbbb;letter-spacing:-0.797px;">API-FORUM</div>
<div class="t" style="left:164.40px;top:69.30px;font-size:15px;color:#bbbbbb;letter-spacing:0.171px;font-weight:bold;">[forum]</div>
<div class="t" style="left:226.40px;top:69.30px;font-size:15px;color:#787c7f;letter-spacing:-0.226px;">C:\Users\wande\Documents\API-FORUM</div>
<div class="t" style="left:59.40px;top:934.30px;font-size:13px;color:#bbbbbb;letter-spacing:-0.375px;">Git</div>
<div class="t" style="left:120.50px;top:934.30px;font-size:13px;color:#bbbbbb;letter-spacing:-0.582px;">TODO</div>
<div class="t" style="left:203.10px;top:934.30px;font-size:13px;color:#bbbbbb;letter-spacing:-0.040px;">Problems</div>
<div class="t" style="left:305.80px;top:934.30px;font-size:13px;color:#bbbbbb;letter-spacing:0.022px;">Terminal</div>
<div class="t" style="left:401.20px;top:934.30px;font-size:13px;color:#bbbbbb;letter-spacing:0.077px;">Profiler</div>
<div class="t" style="left:490.00px;top:934.30px;font-size:13px;color:#bbbbbb;letter-spacing:-0.382px;">Services</div>
<div class="t" style="left:583.10px;top:934.30px;font-size:13px;color:#bbbbbb;letter-spacing:-0.264px;">Build</div>
<div class="t" style="left:702.90px;top:38.90px;font-size:15px;color:#bbbbbb;letter-spacing:-0.059px;">ForumApplicationTests.java</div>
<div class="t" style="left:948.00px;top:38.90px;font-size:15px;color:#bbbbbb;letter-spacing:0.024px;">ForumApplication.java</div>
<div class="v" style="left:8.5px;top:80.40px;color:#ffffff;letter-spacing:0.047px">Project</div>
<div class="v" style="left:8.5px;top:169.60px;color:#bbbbbb;letter-spacing:0.086px">Commit</div>
<div class="v" style="left:8.5px;top:294.50px;color:#bbbbbb;letter-spacing:-0.301px">Pull Requests</div>
<div class="v" style="left:8.5px;top:776.90px;color:#bbbbbb;letter-spacing:-0.094px">Structure</div>
<div class="v" style="left:8.5px;top:888.10px;color:#bbbbbb;letter-spacing:-0.115px">Bookmarks</div>
</div></body></html>
